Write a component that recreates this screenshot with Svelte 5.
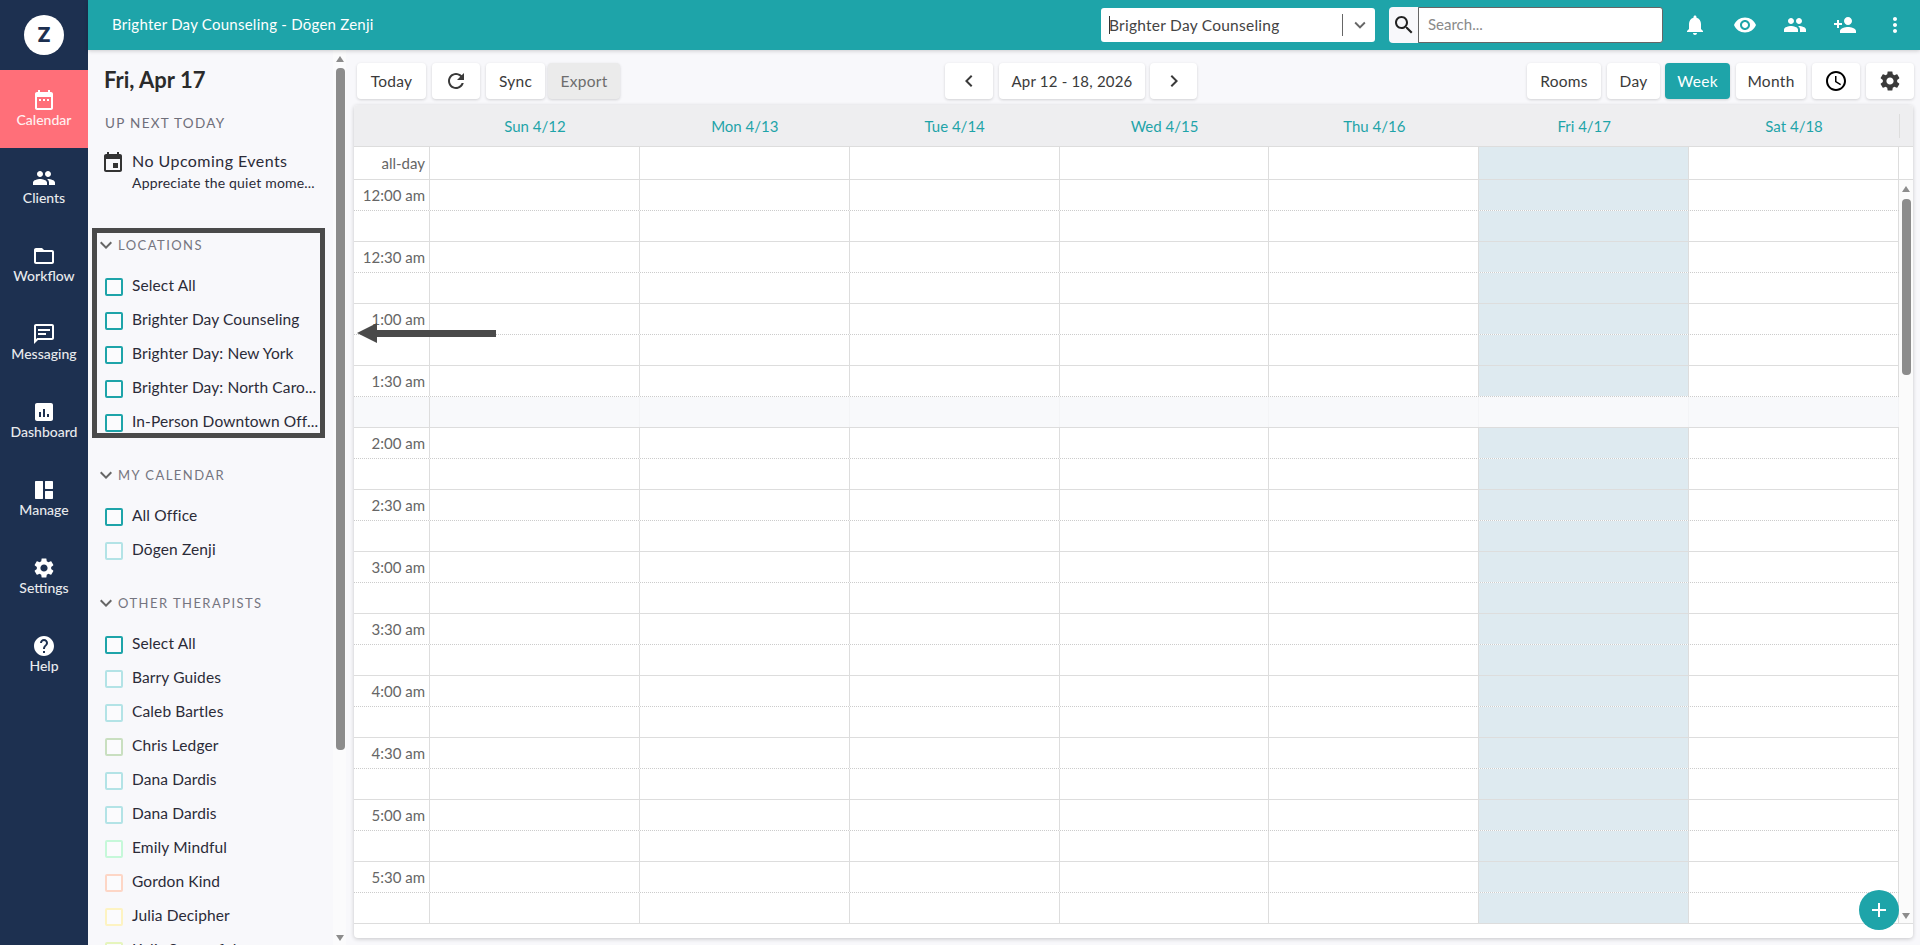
<script>
  const I = {
    calendar: 'M9 11H7v2h2v-2zm4 0h-2v2h2v-2zm4 0h-2v2h2v-2zm2-7h-1V2h-2v2H8V2H6v2H5c-1.11 0-1.99.9-1.99 2L3 20c0 1.1.89 2 2 2h14c1.1 0 2-.9 2-2V6c0-1.1-.9-2-2-2zm0 16H5V9h14v11z',
    event: 'M17 12h-5v5h5v-5zM16 1v2H8V1H6v2H5c-1.11 0-1.99.89-1.99 2L3 19c0 1.1.89 2 2 2h14c1.1 0 2-.9 2-2V5c0-1.1-.9-2-2-2h-1V1h-2zm3 18H5V8h14v11z',
    people: 'M16 11c1.66 0 2.99-1.34 2.99-3S17.66 5 16 5c-1.66 0-3 1.34-3 3s1.34 3 3 3zm-8 0c1.66 0 2.99-1.34 2.99-3S9.66 5 8 5C6.34 5 5 6.34 5 8s1.34 3 3 3zm0 2c-2.33 0-7 1.17-7 3.5V19h14v-2.5c0-2.33-4.67-3.5-7-3.5zm8 0c-.29 0-.62.02-.97.05 1.16.84 1.97 1.97 1.97 3.45V19h6v-2.5c0-2.33-4.67-3.5-7-3.5z',
    folder: 'M20 6h-8l-2-2H4c-1.1 0-1.99.9-1.99 2L2 18c0 1.1.9 2 2 2h16c1.1 0 2-.9 2-2V8c0-1.1-.9-2-2-2zm0 12H4V8h16v10z',
    message: 'M20 2H4c-1.1 0-1.99.9-1.99 2L2 22l4-4h14c1.1 0 2-.9 2-2V4c0-1.1-.9-2-2-2zm0 14H5.17L4 17.17V4h16v12zM6 11h8v2H6zm0-4h12v2H6z',
    dashboard: 'M19 3H5c-1.1 0-2 .9-2 2v14c0 1.1.9 2 2 2h14c1.1 0 2-.9 2-2V5c0-1.1-.9-2-2-2zM9 17H7v-5h2v5zm4 0h-2V9h2v8zm4 0h-2v-3h2v3z',
    manage: 'M4 3h6.5c.3 0 .5.2.5.5v17c0 .3-.2.5-.5.5H4c-.6 0-1-.4-1-1V4c0-.6.4-1 1-1zm9.5 0H20c.6 0 1 .4 1 1v6.5c0 .3-.2.5-.5.5h-7c-.3 0-.5-.2-.5-.5v-7c0-.3.2-.5.5-.5zm0 10h7c.3 0 .5.2.5.5V20c0 .6-.4 1-1 1h-6.500c-.3 0-.5-.2-.5-.5v-7c0-.3.2-.5.5-.5z',
    settings: 'M19.14 12.94c.04-.3.06-.61.06-.94 0-.32-.02-.64-.07-.94l2.03-1.58c.18-.14.23-.41.12-.61l-1.92-3.32c-.12-.22-.37-.29-.59-.22l-2.39.96c-.5-.38-1.03-.7-1.62-.94l-.36-2.54c-.04-.24-.24-.41-.48-.41h-3.84c-.24 0-.43.17-.47.41l-.36 2.54c-.59.24-1.13.57-1.62.94l-2.39-.96c-.22-.08-.47 0-.59.22L2.74 8.87c-.12.21-.08.47.12.61l2.03 1.58c-.05.3-.09.63-.09.94s.02.64.07.94l-2.03 1.58c-.18.14-.23.41-.12.61l1.92 3.32c.12.22.37.29.59.22l2.39-.96c.5.38 1.03.7 1.62.94l.36 2.54c.05.24.24.41.48.41h3.84c.24 0 .44-.17.47-.41l.36-2.54c.59-.24 1.13-.56 1.62-.94l2.39.96c.22.08.47 0 .59-.22l1.92-3.32c.12-.22.07-.47-.12-.61l-2.01-1.58zM12 15.6c-1.98 0-3.6-1.62-3.6-3.6s1.62-3.6 3.6-3.6 3.6 1.62 3.6 3.6-1.62 3.6-3.6 3.6z',
    help: 'M12 2C6.48 2 2 6.48 2 12s4.48 10 10 10 10-4.48 10-10S17.52 2 12 2zm1 17h-2v-2h2v2zm2.07-7.75l-.9.92C13.45 12.9 13 13.5 13 15h-2v-.5c0-1.1.45-2.1 1.17-2.83l1.24-1.26c.37-.36.59-.86.59-1.41 0-1.1-.9-2-2-2s-2 .9-2 2H8c0-2.21 1.79-4 4-4s4 1.790 4 4c0 .88-.36 1.68-.93 2.25z',
    bell: 'M12 22c1.1 0 2-.9 2-2h-4c0 1.1.89 2 2 2zm6-6v-5c0-3.07-1.64-5.64-4.5-6.32V4c0-.83-.67-1.5-1.5-1.5s-1.5.67-1.5 1.5v.68C7.63 5.36 6 7.92 6 11v5l-2 2v1h16v-1l-2-2z',
    eye: 'M12 4.5C7 4.5 2.73 7.61 1 12c1.73 4.39 6 7.5 11 7.5s9.27-3.11 11-7.5c-1.73-4.39-6-7.5-11-7.5zM12 17c-2.76 0-5-2.24-5-5s2.24-5 5-5 5 2.24 5 5-2.24 5-5 5zm0-8c-1.66 0-3 1.34-3 3s1.34 3 3 3 3-1.34 3-3-1.34-3-3-3z',
    personAdd: 'M15 12c2.21 0 4-1.79 4-4s-1.79-4-4-4-4 1.79-4 4 1.79 4 4 4zm-9-2V7H4v3H1v2h3v3h2v-3h3v-2H6zm9 4c-2.67 0-8 1.34-8 4v2h16v-2c0-2.66-5.33-4-8-4z',
    more: 'M12 8c1.1 0 2-.9 2-2s-.9-2-2-2-2 .9-2 2 .9 2 2 2zm0 2c-1.1 0-2 .9-2 2s.9 2 2 2 2-.9 2-2-.9-2-2-2zm0 6c-1.1 0-2 .9-2 2s.9 2 2 2 2-.9 2-2-.9-2-2-2z',
    search: 'M15.5 14h-.79l-.28-.27C15.41 12.59 16 11.11 16 9.5 16 5.91 13.09 3 9.5 3S3 5.91 3 9.5 5.91 16 9.5 16c1.61 0 3.09-.59 4.23-1.57l.27.28v.79l5 4.99L20.49 19l-4.99-5zm-6 0C7.01 14 5 11.99 5 9.5S7.01 5 9.5 5 14 7.01 14 9.5 11.99 14 9.5 14z',
    refresh: 'M17.65 6.35C16.2 4.9 14.21 4 12 4c-4.42 0-7.99 3.58-7.99 8s3.57 8 7.99 8c3.73 0 6.84-2.55 7.73-6h-2.08c-.82 2.33-3.04 4-5.65 4-3.31 0-6-2.69-6-6s2.69-6 6-6c1.66 0 3.14.69 4.22 1.78L13 11h7V4l-2.35 2.35z',
    down: 'M7.41 8.59L12 13.17l4.59-4.58L18 10l-6 6-6-6z',
    left: 'M15.41 7.41L14 6l-6 6 6 6 1.41-1.41L10.83 12z',
    right: 'M10 6L8.59 7.41 13.17 12l-4.58 4.59L10 18l6-6z',
    clock: 'M11.99 2C6.47 2 2 6.48 2 12s4.47 10 9.99 10C17.52 22 22 17.52 22 12S17.52 2 11.99 2zM12 20c-4.42 0-8-3.58-8-8s3.58-8 8-8 8 3.58 8 8-3.58 8-8 8zm.5-13H11v6l5.25 3.15.75-1.23-4.5-2.67z',
    add: 'M19 13h-6v6h-2v-6H5v-2h6V5h2v6h6v2z'
  };
  const nav = [
    ['Calendar', I.calendar], ['Clients', I.people], ['Workflow', I.folder], ['Messaging', I.message],
    ['Dashboard', I.dashboard], ['Manage', I.manage], ['Settings', I.settings], ['Help', I.help]
  ];
  const T = '#1ea4a9', L = '#b3e3e6';
  const sections = [
    { title: 'Locations', rows: [['Select All', T], ['Brighter Day Counseling', T], ['Brighter Day: New York', T], ['Brighter Day: North Caro...', T], ['In-Person Downtown Off...', T]] },
    { title: 'My Calendar', rows: [['All Office', T], ['Dōgen Zenji', L]] },
    { title: 'Other Therapists', rows: [['Select All', T], ['Barry Guides', L], ['Caleb Bartles', L], ['Chris Ledger', '#c9dfc0'], ['Dana Dardis', L], ['Dana Dardis', L], ['Emily Mindful', '#c6f8d9'], ['Gordon Kind', '#fdd6c6'], ['Julia Decipher', '#fdf3c2'], ['Kelis Sorrowful', '#e6f5bd']] }
  ];
  const days = ['Sun 4/12', 'Mon 4/13', 'Tue 4/14', 'Wed 4/15', 'Thu 4/16', 'Fri 4/17', 'Sat 4/18'];
  const times = ['12:00', '12:30', '1:00', '1:30', '2:00', '2:30', '3:00', '3:30', '4:00', '4:30', '5:00', '5:30'];
  const slots = times.flatMap((t) => [t + ' am', '']);
</script>

{#snippet icon(d, size = 24)}
  <svg width={size} height={size} viewBox="0 0 24 24" fill="currentColor" aria-hidden="true"><path {d} /></svg>
{/snippet}

<div class="app">
  <nav class="nav">
    <div class="logo"><span>Z</span></div>
    {#each nav as [label, d], i}
      <div class="nav-item" class:active={i === 0}>
        {@render icon(d)}
        <span>{label}</span>
      </div>
    {/each}
  </nav>

  <div class="right">
    <header class="top">
      <div class="title">Brighter Day Counseling - Dōgen Zenji</div>
      <div class="select">
        <span class="caret"></span>
        <span class="sel-text">Brighter Day Counseling</span>
        <span class="sep"></span>
        <span class="sel-chev">{@render icon(I.down, 22)}</span>
      </div>
      <div class="search-icon">{@render icon(I.search, 24)}</div>
      <div class="search">Search...</div>
      <div class="top-icons">
        {#each [I.bell, I.eye, I.people, I.personAdd, I.more] as d}
          <span class="top-icon">{@render icon(d)}</span>
        {/each}
      </div>
    </header>

    <div class="body">
      <aside class="panel">
        <div class="panel-scroll">
          <h1>Fri, Apr 17</h1>
          <div class="up-next">UP NEXT TODAY</div>
          <div class="event">
            {@render icon(I.event)}
            <div>
              <div class="ev-title">No Upcoming Events</div>
              <div class="ev-sub">Appreciate the quiet mome...</div>
            </div>
          </div>
          {#each sections as s}
            <section class="section">
              <div class="sec-head">{@render icon(I.down)}<span>{s.title}</span></div>
              <div class="sec-list">
                {#each s.rows as [name, color]}
                  <div class="check-row">
                    <span class="check" style:border-color={color}></span>
                    <span class="check-name">{name}</span>
                  </div>
                {/each}
              </div>
            </section>
          {/each}
          <div class="mark"></div>
        </div>
        <div class="scrollbar panel-bar">
          <span class="arr up"></span>
          <span class="thumb"></span>
          <span class="arr dn"></span>
        </div>
      </aside>

      <main class="main">
        <div class="toolbar">
          <div class="group">
            <button class="w-today">Today</button>
            <button class="w-icon">{@render icon(I.refresh)}</button>
            <button class="w-sync">Sync</button>
            <button class="w-export disabled">Export</button>
          </div>
          <div class="group center">
            <button class="w-icon">{@render icon(I.left)}</button>
            <button class="w-date">Apr 12 - 18, 2026</button>
            <button class="w-next">{@render icon(I.right)}</button>
          </div>
          <div class="group">
            <button class="w-rooms">Rooms</button>
            <button class="w-day">Day</button>
            <button class="w-week on">Week</button>
            <button class="w-month">Month</button>
            <button class="w-icon black">{@render icon(I.clock)}</button>
            <button class="w-icon">{@render icon(I.settings)}</button>
          </div>
        </div>

        <div class="card">
          <div class="grid-row head">
            <div></div>
            {#each days as d}<div class="head-cell">{d}</div>{/each}
          </div>
          <div class="grid-row allday">
            <div class="time-cell allday-label">all-day</div>
            {#each days as d, i}<div class="cell" class:today={i === 5}></div>{/each}
          </div>
          <div class="scroller">
            <div class="rows">
              {#each slots as t, r}
                <div class="grid-row slot" class:dotted={r % 2 === 0} class:soft={r === 7}>
                  <div class="time-cell">{t}</div>
                  {#each days as d, i}<div class="cell" class:today={i === 5}></div>{/each}
                </div>
              {/each}
            </div>
            <div class="scrollbar grid-bar">
              <span class="arr up"></span>
              <span class="thumb"></span>
              <span class="arr dn"></span>
            </div>
          </div>
          <button class="fab" aria-label="Add">{@render icon(I.add, 24)}</button>
        </div>

        <div class="arrow"><span class="shaft"></span><span class="head-tip"></span></div>
      </main>
    </div>
  </div>
</div>

<style>
  :global(body) { margin: 0; background: #f8f8fb; }
  .app {
    display: flex;
    height: 945px;
    overflow: hidden;
    font-family: Lato, "Liberation Sans", sans-serif;
    color: #2b2b38;
  }
  svg { display: block; flex: none; }

  .nav { width: 88px; flex: none; background: #1d3050; color: #fff; }
  .logo { height: 70px; display: flex; align-items: center; justify-content: center; }
  .logo span {
    width: 40px; height: 40px; border-radius: 50%; background: #fff; color: #1d3050;
    display: flex; align-items: center; justify-content: center;
    font: 800 20px/1 Inter, sans-serif;
  }
  .nav-item {
    height: 78px; box-sizing: border-box; padding-top: 18px;
    display: flex; flex-direction: column; align-items: center;
    font-size: 14px; line-height: 16px; font-weight: 500; color: #fff;
  }
  .nav-item span { opacity: .9; }
  .nav-item.active { background: #ff6f79; }

  .right { flex: 1; min-width: 0; display: flex; flex-direction: column; }
  .top {
    height: 50px; flex: none; background: #1ea4a9; color: #fff;
    display: flex; align-items: center; position: relative; z-index: 2;
    box-shadow: 0 1px 4px rgba(0, 0, 0, .18);
  }
  .title { margin-left: 24px; padding-bottom: 2px; font-size: 15px; letter-spacing: .25px; margin-right: auto; }
  .select {
    width: 274px; height: 34px; box-sizing: border-box; background: #fff; border-radius: 3px;
    display: flex; align-items: center; color: #444; font-size: 15.5px; letter-spacing: .25px; padding-left: 8px;
  }
  .caret { width: 1px; height: 18px; background: #333; margin-right: -1px; }
  .sel-text { flex: 1; }
  .sep { width: 1px; height: 22px; background: #666; }
  .sel-chev { color: #666; margin: 0 4px 0 6px; }
  .search-icon {
    width: 29px; height: 36px; margin-left: 14px; background: #f8f8fb; color: #222;
    border-radius: 4px 0 0 4px; display: flex; align-items: center; justify-content: center;
  }
  .search {
    width: 245px; height: 36px; box-sizing: border-box; background: #fff;
    border: 1px solid #666; border-radius: 0 3px 3px 0;
    padding-left: 9px; line-height: 33px; font-size: 15px; color: #8a8a8a;
  }
  .top-icons { display: flex; margin-left: 7px; }
  .top-icon { width: 50px; display: flex; justify-content: center; }

  .body { flex: 1; min-height: 0; display: flex; }

  .panel { width: 258px; flex: none; display: flex; position: relative; background: #f8f8fb; }
  .panel-scroll { flex: 1; min-width: 0; overflow: hidden; padding-left: 17px; position: relative; box-sizing: border-box; }
  h1 { margin: 17px 0 0 -1px; font-size: 22px; line-height: 26px; font-weight: 700; color: #2b2b2b; }
  .up-next { margin-top: 22px; font-size: 13.5px; line-height: 16px; letter-spacing: 1.3px; color: #6f6f7a; }
  .event { display: flex; gap: 7px; margin: 20px 0 0 -4px; }
  .event svg { color: #333; }
  .ev-title { font-size: 16px; line-height: 20px; letter-spacing: .45px; }
  .ev-sub { font-size: 14px; line-height: 18px; margin-top: 3px; letter-spacing: .2px; white-space: nowrap; }

  .section { margin-top: 27px; }
  .section:first-of-type { margin-top: 43px; }
  .sec-head {
    display: flex; align-items: center; height: 20px; margin-left: -11px;
    color: #666; text-transform: uppercase; font-size: 13px; letter-spacing: 1.45px;
  }
  .sec-head span { color: #757580; }
  .sec-list { margin-top: 13px; }
  .check-row { height: 34px; display: flex; align-items: center; gap: 9px; font-size: 15.5px; letter-spacing: .12px; white-space: nowrap; }
  .check {
    width: 18px; height: 18px; box-sizing: border-box; border: 2px solid; border-radius: 2px;
    flex: none; position: relative; top: 2px; background: #fbfbfd;
  }
  .mark {
    position: absolute; left: 4px; top: 178px; width: 233px; height: 210px;
    box-sizing: border-box; border: 5px solid #4a4a4a;
  }

  .scrollbar { display: flex; flex-direction: column; align-items: center; width: 13px; flex: none; }
  .thumb { display: block; width: 9px; background: #8c8c8c; border-radius: 4px; }
  .arr { display: block; width: 0; height: 0; border-left: 4.5px solid transparent; border-right: 4.5px solid transparent; }
  .arr.up { border-bottom: 6px solid #8c8c8c; }
  .arr.dn { border-top: 6px solid #8c8c8c; margin-top: auto; }
  .panel-bar { background: #fbfbfc; padding: 6px 0 4px 3px; box-sizing: border-box; height: 895px; align-items: flex-start; }
  .panel-bar .thumb { height: 682px; margin-top: 6px; }

  .main { flex: 1; min-width: 0; position: relative; display: flex; flex-direction: column; padding: 13px 7px 7px 8px; box-sizing: border-box; }
  .toolbar { display: flex; justify-content: space-between; margin: 0 -1px 6px 3px; flex: none; }
  .group { display: flex; gap: 6px; }
  .group.center { margin-right: 5px; }
  button {
    height: 36px; padding: 0; border: 0; border-radius: 4px; background: #fff;
    box-shadow: 0 1px 3px rgba(0, 0, 0, .16); font: 15.5px Lato, sans-serif; color: #3a3a3a;
    display: flex; align-items: center; justify-content: center; letter-spacing: .3px;
  }
  .w-today { width: 69px; }
  .w-icon { width: 48px; }
  .w-next { width: 47px; margin-left: -1px; }
  .w-sync { width: 59px; }
  .w-export { width: 72px; margin-left: -3px; }
  .disabled { background: #ebebeb; color: #6d6d6d; }
  .w-date { width: 146px; font-size: 15px; letter-spacing: .2px; }
  .w-rooms { width: 74px; }
  .w-day { width: 53px; margin-right: -1px; }
  .w-week { width: 65px; }
  .w-month { width: 70px; }
  .on { background: #1ea4a9; color: #fff; }
  .black { color: #000; }

  .card {
    flex: 1; min-height: 0; position: relative; background: #fff; border-radius: 4px;
    box-shadow: 0 1px 4px rgba(0, 0, 0, .2); display: flex; flex-direction: column; overflow: hidden;
  }
  .grid-row { display: grid; grid-template-columns: 76px repeat(7, 209.86px); flex: none; }
  .head { height: 42px; box-sizing: border-box; background: #eeeef0; border-bottom: 1px solid #ddd; position: relative; }
  .head::after { content: ''; position: absolute; left: 1545px; top: 9px; height: 24px; width: 1px; background: #ddd; }
  .head-cell { display: flex; align-items: center; justify-content: center; color: #1ea4a9; font-size: 15px; }
  .allday { height: 33px; box-sizing: border-box; border-bottom: 1px solid #ddd; }
  .cell { border-right: 1px solid #ddd; box-sizing: border-box; }
  .today { background: #deeaf0; }
  .time-cell {
    border-right: 1px solid #ddd; box-sizing: border-box; text-align: right; padding-right: 4px;
    font-size: 15px; line-height: 30px; color: #666; white-space: nowrap;
  }
  .allday-label { line-height: 32px; padding-right: 4px; }
  .scroller { display: flex; border-bottom: 1px solid #ddd; flex: none; height: 744px; box-sizing: border-box; overflow: hidden; }
  .rows { flex: none; width: 1545px; }
  .slot { height: 31px; box-sizing: border-box; border-bottom: 1px solid #ddd; }
  .slot.dotted { border-bottom: 1px dotted #ccc; }
  .slot.soft { background: #f8f9fb; }
  .slot.soft .cell { background: transparent; border-right-color: #f3f4f6; }
  .grid-bar { flex: 1; width: auto; background: #fbfbfb; padding: 6px 0 4px 3px; box-sizing: border-box; align-items: flex-start; }
  .grid-bar .thumb { height: 176px; margin-top: 7px; }
  .fab {
    position: absolute; right: 14px; bottom: 8px; width: 40px; height: 40px; border-radius: 50%;
    background: #1ea4a9; color: #fff; box-shadow: none;
  }
  .arrow { position: absolute; left: 11px; top: 276px; width: 139px; height: 14px; display: flex; align-items: center; }
  .shaft { position: absolute; left: 10px; right: 0; height: 7px; background: #4a4a4a; }
  .head-tip { position: absolute; left: 0; border-right: 20px solid #4a4a4a; border-top: 10px solid transparent; border-bottom: 10px solid transparent; top: -3px; }
</style>
